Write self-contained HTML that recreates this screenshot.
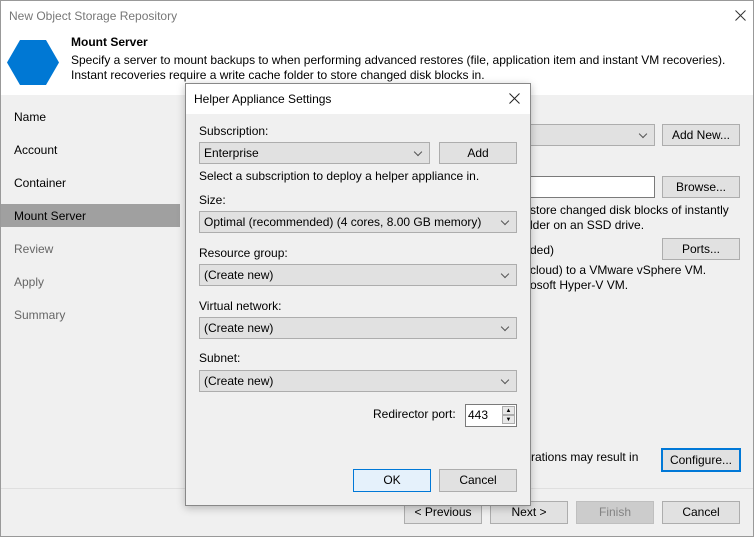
<!DOCTYPE html>
<html><head><style>
*{box-sizing:border-box;margin:0;padding:0}
body{width:754px;height:537px;position:relative;overflow:hidden;font-family:"Liberation Sans",sans-serif;font-size:12px;color:#000;background:#f0f0f0}
.a{position:absolute;white-space:nowrap}
.btn{position:absolute;background:#e1e1e1;border:1px solid #adadad;text-align:center;line-height:20px;font-size:12px}
.cb{position:absolute;background:#e1e1e1;border:1px solid #adadad;line-height:20px;padding-left:4px;font-size:12px}
.cb:after{content:"";position:absolute;right:8px;top:6px;width:5px;height:5px;border-right:1px solid #555;border-bottom:1px solid #555;transform:rotate(45deg)}
.nav{position:absolute;left:14px;font-size:12px}
</style></head><body>
<div class="a" style="left:0;top:0;width:754px;height:95px;background:#fff"></div>
<div class="a" style="left:0;top:0;width:754px;height:537px;border:1px solid #999"></div>
<div class="a" style="left:9px;top:9px;color:#777;font-size:12px">New Object Storage Repository</div>
<svg class="a" style="left:735px;top:10px" width="11" height="11"><path d="M0.5 0.5L10.5 10.5M10.5 0.5L0.5 10.5" stroke="#333" stroke-width="1"/></svg>
<svg class="a" style="left:7px;top:40px" width="52" height="45"><polygon points="13,0 39,0 52,22.5 39,45 13,45 0,22.5" fill="#0078d4"/></svg>
<div class="a" style="left:71px;top:35px;font-weight:bold">Mount Server</div>
<div class="a" style="left:71px;top:53px">Specify a server to mount backups to when performing advanced restores (file, application item and instant VM recoveries).</div>
<div class="a" style="left:71px;top:68px">Instant recoveries require a write cache folder to store changed disk blocks in.</div>
<div class="a" style="left:1px;top:204px;width:179px;height:23px;background:#a0a0a0"></div>
<div class="nav" style="top:110px">Name</div>
<div class="nav" style="top:143px">Account</div>
<div class="nav" style="top:176px">Container</div>
<div class="nav" style="top:209px">Mount Server</div>
<div class="nav" style="top:242px;color:#666">Review</div>
<div class="nav" style="top:275px;color:#666">Apply</div>
<div class="nav" style="top:308px;color:#666">Summary</div>
<div class="cb" style="left:500px;top:124px;width:155px;height:22px"></div>
<div class="btn" style="left:662px;top:124px;width:78px;height:22px">Add New...</div>
<div class="a" style="left:500px;top:176px;width:155px;height:22px;background:#fff;border:1px solid #7a7a7a"></div>
<div class="btn" style="left:662px;top:176px;width:78px;height:22px">Browse...</div>
<div class="a" style="left:530px;top:203px">store changed disk blocks of instantly</div>
<div class="a" style="left:530px;top:218px">lder on an SSD drive.</div>
<div class="a" style="left:530px;top:243px">ded)</div>
<div class="btn" style="left:662px;top:238px;width:78px;height:22px">Ports...</div>
<div class="a" style="left:530px;top:263px">cloud) to a VMware vSphere VM.</div>
<div class="a" style="left:530px;top:278px">osoft Hyper-V VM.</div>
<div class="a" style="left:531px;top:450px">rations may result in</div>
<div class="btn" style="left:661px;top:448px;width:80px;height:24px;border:2px solid #0078d7;line-height:20px">Configure...</div>
<div class="a" style="left:1px;top:488px;width:752px;height:1px;background:#dfdfdf"></div>
<div class="btn" style="left:404px;top:501px;width:78px;height:23px">&lt; Previous</div>
<div class="btn" style="left:490px;top:501px;width:78px;height:23px">Next &gt;</div>
<div class="btn" style="left:576px;top:501px;width:78px;height:23px;background:#ccc;border-color:#bfbfbf;color:#838383">Finish</div>
<div class="btn" style="left:662px;top:501px;width:78px;height:23px">Cancel</div>

<div class="a" style="left:185px;top:83px;width:346px;height:423px;background:#f0f0f0;border:1px solid #888;box-shadow:0 2px 8px rgba(0,0,0,.25)"></div>
<div class="a" style="left:186px;top:84px;width:344px;height:30px;background:#fff"></div>
<div class="a" style="left:194px;top:92px">Helper Appliance Settings</div>
<svg class="a" style="left:509px;top:93px" width="11" height="11"><path d="M0.5 0.5L10.5 10.5M10.5 0.5L0.5 10.5" stroke="#222" stroke-width="1"/></svg>
<div class="a" style="left:199px;top:124px">Subscription:</div>
<div class="cb" style="left:199px;top:142px;width:231px;height:22px">Enterprise</div>
<div class="btn" style="left:439px;top:142px;width:78px;height:22px">Add</div>
<div class="a" style="left:199px;top:169px">Select a subscription to deploy a helper appliance in.</div>
<div class="a" style="left:199px;top:193px">Size:</div>
<div class="cb" style="left:199px;top:211px;width:318px;height:22px">Optimal (recommended) (4 cores, 8.00 GB memory)</div>
<div class="a" style="left:199px;top:246px">Resource group:</div>
<div class="cb" style="left:199px;top:264px;width:318px;height:22px">(Create new)</div>
<div class="a" style="left:199px;top:299px">Virtual network:</div>
<div class="cb" style="left:199px;top:317px;width:318px;height:22px">(Create new)</div>
<div class="a" style="left:199px;top:351px">Subnet:</div>
<div class="cb" style="left:199px;top:370px;width:318px;height:22px">(Create new)</div>
<div class="a" style="left:373px;top:407px">Redirector port:</div>
<div class="a" style="left:465px;top:404px;width:52px;height:23px;background:#fff;border:1px solid #7a7a7a;padding:3px 0 0 2px">443</div>
<div class="a" style="left:502px;top:406px;width:13px;height:9px;border:1px solid #adadad;background:#e8e8e8;font-size:6px;text-align:center;line-height:8px">▲</div>
<div class="a" style="left:502px;top:415px;width:13px;height:9px;border:1px solid #adadad;background:#e8e8e8;font-size:6px;text-align:center;line-height:8px">▼</div>
<div class="btn" style="left:353px;top:469px;width:78px;height:23px;background:#e5f1fb;border-color:#0078d7">OK</div>
<div class="btn" style="left:439px;top:469px;width:78px;height:23px">Cancel</div>
</body></html>
